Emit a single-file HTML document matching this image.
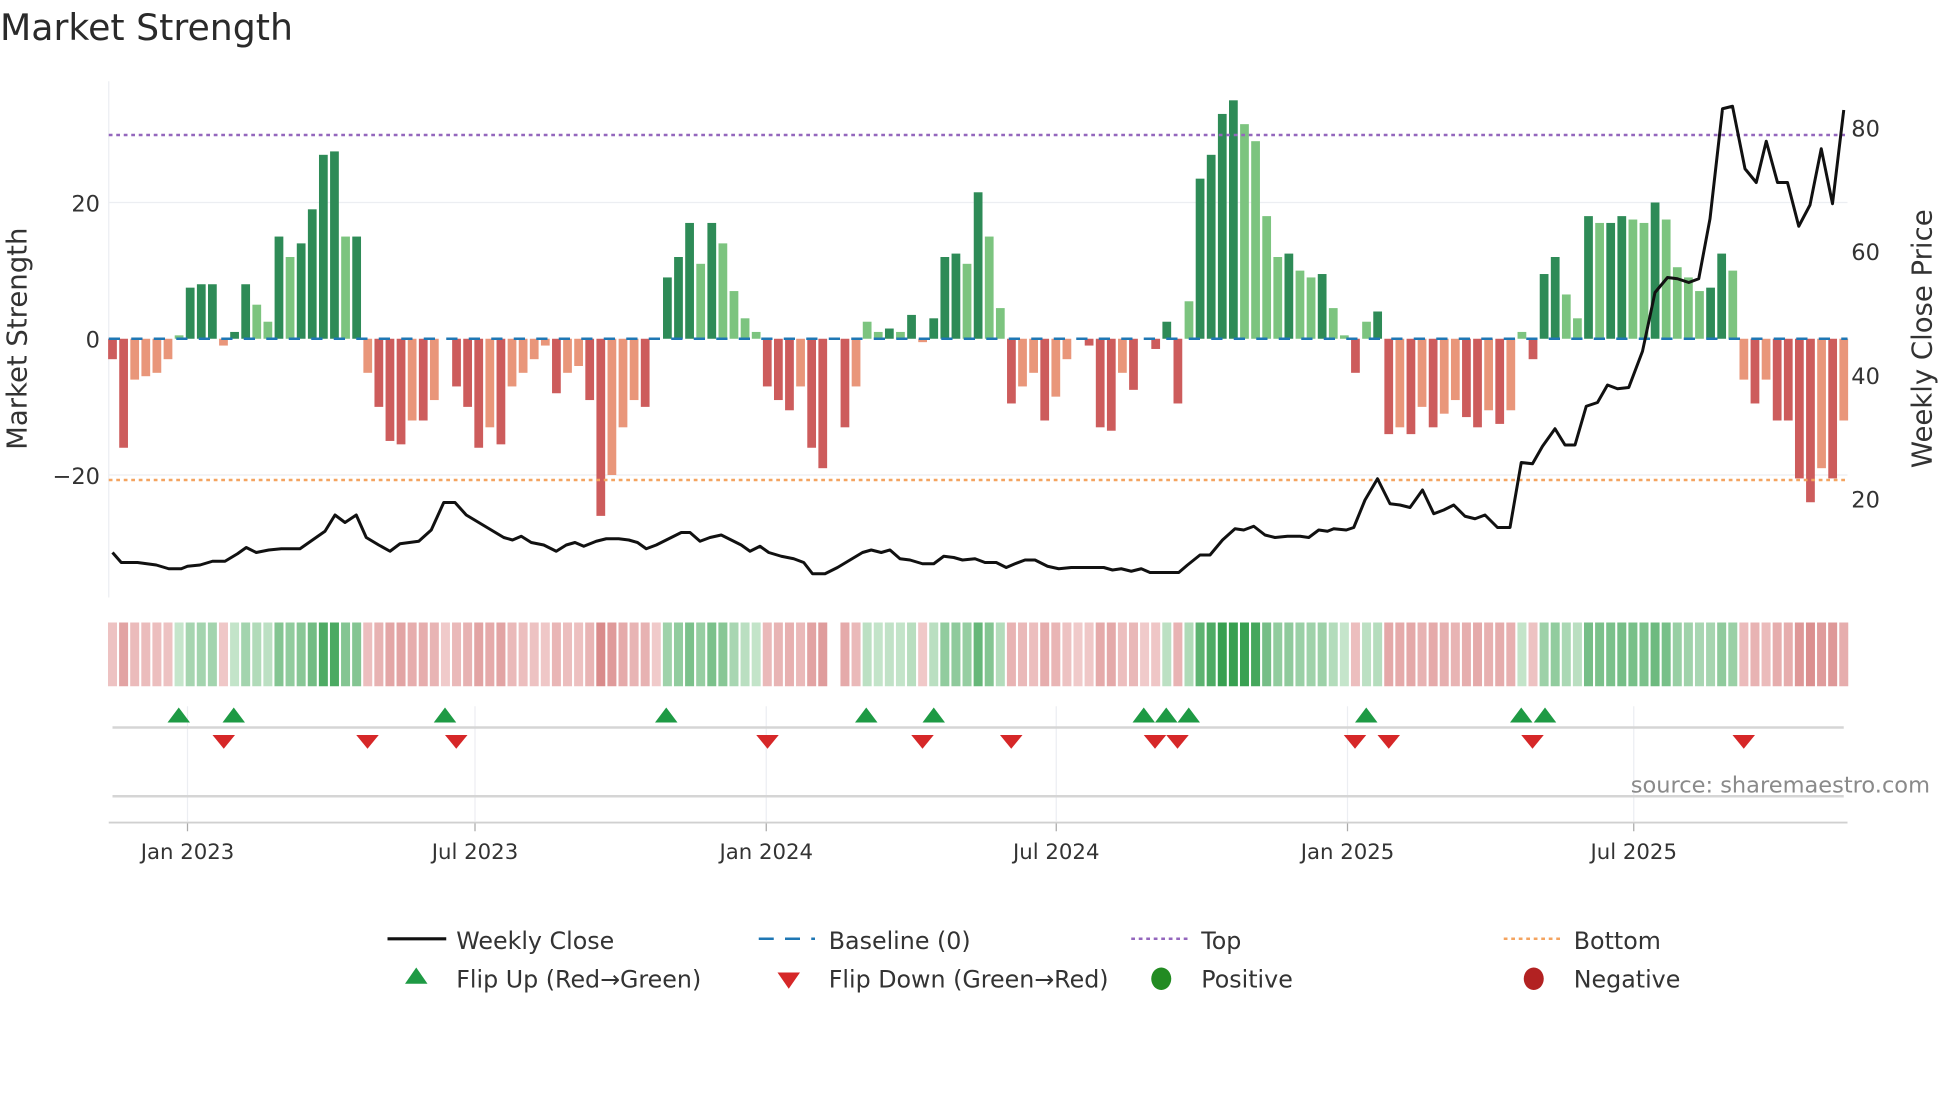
<!DOCTYPE html>
<html><head><meta charset="utf-8"><style>
html,body{margin:0;padding:0;background:#fff;width:1960px;height:1102px;overflow:hidden}
svg text{font-family:"DejaVu Sans","Liberation Sans",sans-serif;fill:#333}
</style></head><body>
<svg id="s" width="1960" height="1102" viewBox="0 0 1568 881.6" xmlns="http://www.w3.org/2000/svg">
<text x="0" y="32" font-size="29" style="fill:#2a2a2a">Market Strength</text>
<g id="grid" stroke="#eceef2" stroke-width="1">
<line x1="87" y1="162" x2="1478" y2="162"/><line x1="87" y1="380" x2="1478" y2="380"/>
<line x1="87" y1="65" x2="87" y2="478"/>
</g>
<g id="bars"></g>
<line x1="87" y1="271" x2="1478" y2="271" stroke="#1f77b4" stroke-width="2" stroke-dasharray="9,9"/>
<line x1="87" y1="108" x2="1478" y2="108" stroke="#9467bd" stroke-width="2" stroke-dasharray="3,3"/>
<line x1="87" y1="384" x2="1478" y2="384" stroke="#f4a460" stroke-width="2" stroke-dasharray="3,3"/>
<polyline id="price" fill="none" stroke="#111" stroke-width="2.4" stroke-linejoin="round"/>
<text x="80" y="169" font-size="18" text-anchor="end">20</text>
<text x="80" y="278" font-size="18" text-anchor="end">0</text>
<text x="80" y="387" font-size="18" text-anchor="end">−20</text>
<text x="1481" y="109" font-size="18">80</text>
<text x="1481" y="208" font-size="18">60</text>
<text x="1481" y="307" font-size="18">40</text>
<text x="1481" y="406" font-size="18">20</text>
<text transform="translate(21,271) rotate(-90)" font-size="22" text-anchor="middle">Market Strength</text>
<text transform="translate(1545,271) rotate(-90)" font-size="22" text-anchor="middle">Weekly Close Price</text>
<g id="heat"></g>
<g stroke="#eceef2" stroke-width="1" id="vg"></g>
<line x1="90" y1="582" x2="1475" y2="582" stroke="#d5d5d5" stroke-width="2"/>
<line x1="90" y1="637" x2="1475" y2="637" stroke="#d5d5d5" stroke-width="2"/>
<line x1="87" y1="658" x2="1478" y2="658" stroke="#d0d0d0" stroke-width="1.5"/>
<g id="tri"></g>
<text x="1544" y="634" font-size="18" text-anchor="end" style="fill:#8a8a8a">source: sharemaestro.com</text>
<g font-size="17" text-anchor="middle" id="ticks"></g>
<g font-size="19">
<line x1="310" y1="751" x2="357" y2="751" stroke="#111" stroke-width="2.5"/><text x="365" y="759">Weekly Close</text>
<line x1="607" y1="751" x2="652" y2="751" stroke="#1f77b4" stroke-width="2" stroke-dasharray="12,9"/><text x="663" y="759">Baseline (0)</text>
<line x1="905" y1="751" x2="950" y2="751" stroke="#9467bd" stroke-width="2" stroke-dasharray="3,3"/><text x="961" y="759">Top</text>
<line x1="1203" y1="751" x2="1248" y2="751" stroke="#f4a460" stroke-width="2" stroke-dasharray="3,3"/><text x="1259" y="759">Bottom</text>
<polygon points="333,774 324,787 342,787" fill="#1e9a44"/><text x="365" y="790">Flip Up (Red→Green)</text>
<polygon points="622,778 640,778 631,791" fill="#d62728"/><text x="663" y="790">Flip Down (Green→Red)</text>
<ellipse cx="929" cy="783" rx="8" ry="9" fill="#228b22"/><text x="961" y="790">Positive</text>
<ellipse cx="1227" cy="783" rx="8" ry="9" fill="#b22222"/><text x="1259" y="790">Negative</text>
</g>
</svg>
<script>
var V=[-3,-16,-6,-5.5,-5,-3,0.5,7.5,8,8,-1,1,8,5,2.5,15,12,14,19,27,27.5,15,15,-5,-10,-15,-15.5,-12,-12,-9,0,-7,-10,-16,-13,-15.5,-7,-5,-3,-1,-8,-5,-4,-9,-26,-20,-13,-9,-10,0,9,12,17,11,17,14,7,3,1,-7,-9,-10.5,-7,-16,-19,0,-13,-7,2.5,1,1.5,1,3.5,-0.5,3,12,12.5,11,21.5,15,4.5,-9.5,-7,-5,-12,-8.5,-3,0,-1,-13,-13.5,-5,-7.5,0,-1.5,2.5,-9.5,5.5,23.5,27,33,35,31.5,29,18,12,12.5,10,9,9.5,4.5,0.5,-5,2.5,4,-14,-13,-14,-10,-13,-11,-9,-11.5,-13,-10.5,-12.5,-10.5,1,-3,9.5,12,6.5,3,18,17,17,18,17.5,17,20,17.5,10.5,9,7,7.5,12.5,10,-6,-9.5,-6,-12,-12,-20.5,-24,-19,-20.5,-12];
var NS="http://www.w3.org/2000/svg";
function el(t,a,p){var e=document.createElementNS(NS,t);for(var k in a)e.setAttribute(k,a[k]);document.getElementById(p).appendChild(e);return e;}
var n=V.length,x0=90,dx=(1475-x0)/(n-1);
function mix(a,b,t){return 'rgb('+[0,1,2].map(function(i){return Math.round(a[i]+(b[i]-a[i])*t)}).join(',')+')';}
for(var i=0;i<n;i++){var v=V[i],p=i?V[i-1]:0,x=x0+i*dx;
 if(v!==0){var dark=Math.abs(v)>=Math.abs(p);var c=v>0?(dark?'#2e8b57':'#7cc47f'):(dark?'#cd5c5c':'#e9967a');
 var y=271-v*5.45;el('rect',{x:x-3.5,y:Math.min(y,271),width:7,height:Math.abs(v)*5.45,fill:c},'bars');}
 var t=Math.min(1,0.15+Math.abs(v)/32*0.85),hc;
 if(v>0)hc=mix([225,242,227],[55,160,80],t);else hc=mix([245,215,215],[212,125,125],t);
 if(!(v===0&&i==65))el('rect',{x:x-3.6,y:498,width:7.2,height:51,fill:hc},'heat');}
var P=[[90,442],[97,450],[110,450],[125,452],[135,455],[145,455],[150,453],[160,452],[170,449],[180,449],[190,443],[197,438],[205,442],[215,440],[225,439],[240,439],[250,432],[260,425],[268,412],[276,418],[285,412],[293,430],[303,436],[312,441],[320,435],[335,433],[345,424],[355,402],[364,402],[373,412],[383,418],[393,424],[403,430],[410,432],[417,429],[425,434],[435,436],[445,441],[453,436],[460,434],[467,437],[477,433],[485,431],[495,431],[503,432],[510,434],[517,439],[525,436],[535,431],[545,426],[552,426],[560,433],[568,430],[577,428],[585,432],[593,436],[600,441],[608,437],[615,442],[625,445],[635,447],[643,450],[650,459],[660,459],[670,454],[680,448],[690,442],[697,440],[705,442],[712,440],[720,447],[728,448],[738,451],[747,451],[755,445],[763,446],[770,448],[780,447],[788,450],[797,450],[805,454],[812,451],[820,448],[828,448],[838,453],[847,455],[857,454],[870,454],[883,454],[890,456],[897,455],[905,457],[913,455],[920,458],[930,458],[943,458],[950,452],[960,444],[968,444],[978,432],[988,423],[995,424],[1003,421],[1012,428],[1020,430],[1030,429],[1040,429],[1047,430],[1055,424],[1062,425],[1067,423],[1077,424],[1083,422],[1092,400],[1102,383],[1112,403],[1120,404],[1128,406],[1138,392],[1147,411],[1155,408],[1163,404],[1172,413],[1180,415],[1188,412],[1198,422],[1208,422],[1217,370],[1226,371],[1234,357],[1244,343],[1252,356],[1260,356],[1269,325],[1278,322],[1286,308],[1294,311],[1303,310],[1314,281],[1324,234],[1334,222],[1342,223],[1351,226],[1359,223],[1368,175],[1378,87],[1386,85],[1396,135],[1405,146],[1413,113],[1422,146],[1430,146],[1439,181],[1448,164],[1457,119],[1466,163],[1475,88]];
document.getElementById('price').setAttribute('points',P.map(function(p){return p.join(',')}).join(' '));
[143,187,356,533,693,747,915,933,951,1093,1217,1236].forEach(function(x){el('polygon',{points:(x)+',566 '+(x-9)+',578 '+(x+9)+',578',fill:'#1e9a44'},'tri');});
[179,294,365,614,738,809,924,942,1084,1111,1226,1395].forEach(function(x){el('polygon',{points:(x-9)+',588 '+(x+9)+',588 '+x+',599',fill:'#d62728'},'tri');});
var T=[[150,'Jan 2023'],[380,'Jul 2023'],[613,'Jan 2024'],[845,'Jul 2024'],[1078,'Jan 2025'],[1307,'Jul 2025']];
T.forEach(function(t){el('line',{x1:t[0],y1:565,x2:t[0],y2:657},'vg');el('line',{x1:t[0],y1:658,x2:t[0],y2:665,stroke:'#aaa'},'vg');var e=el('text',{x:t[0],y:687},'ticks');e.textContent=t[1];});
</script>
</body></html>
